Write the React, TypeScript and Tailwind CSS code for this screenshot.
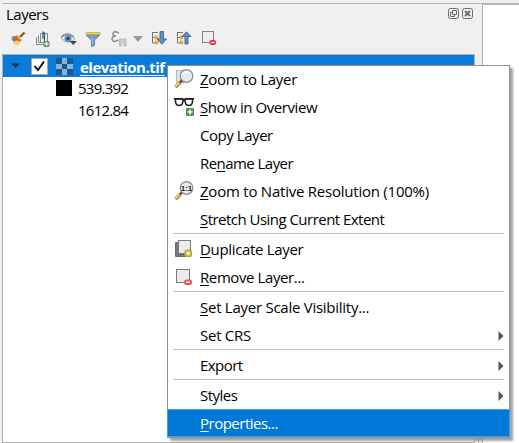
import type { ReactNode } from "react";

function PageIcon({ kind }: { kind: "remove" | "duplicate" }) {
  return (
    <svg width="20" height="20" viewBox="1 0 20 20">
      {kind === "duplicate" && <path d="M2.5 3.5h4v12h9v2h-13z" fill="#777" stroke="#6b6c69" />}
      <rect x={kind === "duplicate" ? 5.5 : 3.5} y={kind === "duplicate" ? 1.5 : 2.5} width={kind === "duplicate" ? 12 : 13} height="13" fill="#ebebeb" stroke="#7b7c77" />
      {kind === "duplicate" ? (
        <>
          <rect x="11.5" y="10.5" width="7.5" height="7.5" rx="2" fill="#bba52c" />
          <path d="M15.25 11.5v5.5M12.5 14.25H18M13.25 12.25l4 4M17.25 12.25l-4 4" stroke="#fff5a8" strokeWidth=".9" />
        </>
      ) : (
        <>
          <rect x="11" y="12.5" width="8" height="5.5" rx="2.5" fill="#ef5358" />
          <path d="M13 15.25h4" stroke="#fff" strokeWidth="1.5" />
        </>
      )}
    </svg>
  );
}

function ZoomIcon({ native = false }: { native?: boolean }) {
  return (
    <svg width="20" height="20" viewBox="0 0 20 20">
      {!native && <path d="M2.5 1.5h8v12h-8z" fill="#e4e4e4" stroke="#b3b3b3" />}
      <path d="M6 13.5 1.5 18" stroke="#8b7028" strokeWidth="3.4" />
      <path d="M5.5 13.5 1.5 17.5" stroke="#f2ce5b" strokeWidth="2.2" />
      <path d="m8.5 10.5-2.5 3" stroke="#333" strokeWidth="2" />
      <circle cx="12.5" cy="7" r="6.3" fill="#e8e8e8" stroke="#8c8c8c" strokeWidth="1.2" />
      {native ? (
        <text x="12.5" y="10" textAnchor="middle" fontFamily="Liberation Sans, sans-serif" fontWeight="bold" fontSize="8" fill="#222">1:1</text>
      ) : (
        <path d="M8.5 5.5a4.5 4.5 0 0 1 7-1.5" stroke="#fff" strokeWidth="1.5" fill="none" />
      )}
    </svg>
  );
}

function OverviewIcon() {
  return (
    <svg width="20" height="20" viewBox="0 0 20 20" fill="none">
      <path d="M0 1.8h7.5q1.5 0 2.5 1 1-1 2.5-1H20" stroke="#151515" strokeWidth="1.7" />
      <path d="M1.5 2q-.5 6.5 3.5 6.5 4 0 4-5.5M11 3q0 5.5 4 5.5 4 0 3.5-6.5" stroke="#151515" strokeWidth="1.5" />
      <rect x="12" y="11" width="8" height="8" rx="1.2" fill="#4d9157" />
      <path d="M16 12.5v5M13.5 15h5" stroke="#fff" strokeWidth="1.7" />
    </svg>
  );
}

function Broom() {
  return (
    <svg width="16" height="16" viewBox="0 0 16 16">
      <path d="m10 6 4.500-4.500" stroke="#8f5d20" strokeWidth="2.4" />
      <path d="m7 4 5 5-2 2-5-5z" fill="#c49128" />
      <path d="M1 5.5 6 5l4 5-1 2z" fill="#e95448" />
      <path d="m1 7.5 3 4 4-.5-4-4z" fill="#528ac5" />
      <path d="m3 10.5 4-1 4 1.5-3 3.5-4-1z" fill="#f6d34c" />
      <path d="m8 5 4 5" stroke="#ebcf86" />
    </svg>
  );
}

function AddGroup() {
  return (
    <svg width="16" height="17" viewBox="0 0 16 17" fill="none">
      <path d="M1.5 6.5v7h8M3.5 4.5v7h8M5.5 2.5h7v9h-7z" stroke="#858783" />
      <path d="M9.5 12V3q0-2-1.5-2v7" stroke="#315f87" strokeWidth="1.2" />
      <rect x="8.5" y="10" width="6" height="6" rx="1" fill="#579b60" />
      <path d="M11.5 11v4M9.5 13h4" stroke="#fff" strokeWidth="1.3" />
    </svg>
  );
}

function Eye() {
  return (
    <svg width="18" height="15" viewBox="0 0 18 15">
      <path d="M1 6q7-7 14 1-7 7-14-1z" fill="#e4e9ec" stroke="#a8abad" />
      <path d="M1 5q6-6 13 0" fill="none" stroke="#858a8d" strokeWidth="1.4" />
      <circle cx="8" cy="6.5" r="3.5" fill="#638eb7" />
      <circle cx="8" cy="6.5" r="1.5" fill="#223d58" />
      <path d="M9.5 9H17l-3.75 4z" fill="#454545" />
    </svg>
  );
}

function Filter() {
  return (
    <svg width="16" height="17" viewBox="0 0 16 17">
      <path d="M1.5 2.5h13v2L9.5 9v5.5l-3 1V9l-5-4.5z" fill="#6f9bc9" stroke="#567da5" strokeWidth=".8" />
      <path d="M1 1.5h14v2H1z" fill="#f4d447" stroke="#b69d38" strokeWidth=".6" />
      <path d="M7.5 6v8" stroke="#9ec1df" />
    </svg>
  );
}

function Expression() {
  return (
    <svg width="18" height="18" viewBox="0 0 18 18" fill="none">
      <path d="M8 3Q2 0 2 4q0 2 3 2-4 0-4 3.5Q2 13 7.5 10" stroke="#8c8c8c" strokeWidth="1.5" />
      <path d="M8.500 9h6.500v7h-2v-4h-2.500v4h-2z" fill="#cacaca" stroke="#b5b5b5" strokeWidth=".8" />
    </svg>
  );
}

function TreeArrow({ up = false }: { up?: boolean }) {
  return (
    <svg width="16" height="16" viewBox="0 0 16 16" fill="none">
      <path d="M1 1.5h6M1.5 1v11H4M1.5 6.5H4" stroke="#777" />
      <path d="M4.5 5.5h2v2h-2zM4.5 10.5h2v2h-2z" fill="#fff" stroke="#f29a32" strokeWidth="1.3" />
      <path d={up ? "M9 13V5.500H6L10.500 .8l4.500 4.700h-3V13z" : "M9 .5h3.500V8h3L10.750 13.200 6 8h3z"} fill="#5f8fc1" stroke="#3d6896" strokeWidth=".9" />
    </svg>
  );
}

function RemoveTool() {
  return (
    <svg width="16" height="16" viewBox="0 0 16 16">
      <rect x="1.5" y=".5" width="11" height="11" fill="#ececeb" stroke="#85857a" />
      <rect x="8.5" y="9" width="6.5" height="5" rx="2" fill="#ed3039" />
      <path d="M10 11.5h3.5" stroke="#fff" strokeWidth="1.2" />
    </svg>
  );
}

function MenuItem({ icon, children, tracking, arrow = false, first = false, selected = false }: { icon?: ReactNode; children: ReactNode; tracking: string; arrow?: boolean; first?: boolean; selected?: boolean }) {
  return (
    <div className={`flex shrink-0 items-center ${first ? "h-[27px] pb-px" : "h-7"} ${selected ? "-mx-px border border-[#3c9ff0] bg-[#0078d7] text-white" : ""}`}>
      <div className={`flex h-5 w-8 shrink-0 items-center ${selected ? "pl-[7px]" : "pl-1.5"}`}>{icon}</div>
      <span className={`whitespace-nowrap leading-5 ${tracking}`}>{children}</span>
      {arrow && <svg className="mt-0.5 mr-[5px] ml-auto" width="6" height="10" viewBox="0 0 6 10"><path d="M.5 0 5.5 5 .5 10z" fill="#555" /></svg>}
    </div>
  );
}

const U = ({ children }: { children: ReactNode }) => <span className="underline decoration-1 underline-offset-2">{children}</span>;
const Separator = () => <div className="mx-[5px] h-0.5 shrink-0 border-t border-[#bdbdbd]" />;

export default function App() {
  return (
    <div className="relative flex h-[443px] w-[519px] flex-col overflow-hidden bg-[#f0f0f0] font-['Open_Sans','Noto_Sans',sans-serif] text-[15px] text-black">
      <div className="ml-0.5 h-1 shrink-0 border-b border-[#b5b5b5]" />
      <div className="flex min-h-0 flex-1">
        <div className="flex w-[475px] flex-col pl-0.5">
          <div className="flex h-[22px] items-center justify-between pr-0.5 pl-1">
            <h1 className="pb-0.5 leading-5 tracking-[-0.5px]">Layers</h1>
            <div className="mb-1 flex gap-[3px]">
              <svg width="11" height="11" viewBox="0 0 11 11" fill="none" stroke="#6b6b69"><rect x=".5" y=".5" width="10" height="10" rx="2" /><path d="M4.5 2.5h4v4h-4zM4 4.5H2.5v4h4V7" /></svg>
              <svg width="11" height="11" viewBox="0 0 11 11" fill="none" stroke="#6b6b69"><rect x=".5" y=".5" width="10" height="10" rx="2" /><path d="m3 3 5 5M8 3 3 8" strokeWidth="2" /></svg>
            </div>
          </div>
          <div className="flex h-7 items-center pb-0.5 pl-2">
            <Broom />
            <div className="ml-[9px]"><AddGroup /></div>
            <div className="ml-[9px]"><Eye /></div>
            <div className="ml-[7px]"><Filter /></div>
            <div className="ml-[10px]"><Expression /></div>
            <svg className="ml-1" width="10" height="6" viewBox="0 0 10 6"><path d="M0 0h10L5 6z" fill="#999" /></svg>
            <div className="ml-2"><TreeArrow /></div>
            <div className="ml-[9px]"><TreeArrow up /></div>
            <div className="ml-[9px]"><RemoveTool /></div>
          </div>
          <div className="min-h-0 flex-1 border border-[#b0b0b0] bg-white">
            <div className="flex h-[22px] items-center bg-[#0a7bd8] text-white">
              <svg className="ml-2" width="10" height="6" viewBox="0 0 10 6"><path d="M0 .5h9L4.5 5z" fill="#153650" /></svg>
              <svg className="ml-2.5" width="17" height="17" viewBox="0 0 17 17"><path d="M.5.5h16v16H.5z" fill="#fff" stroke="#a8a8a8" /><path d="m3.5 8 3.5 4 6-8.5" fill="none" stroke="#000" strokeWidth="1.8" /></svg>
              <svg className="ml-2" width="17" height="17" viewBox="0 0 17 17">
                <path d="M0 0h17v17H0z" fill="#0872c4" />
                <path d="M0 0h6v6H0zM11 0h6v6h-6zM5 6h6v5H5zM0 11h6v6H0zM11 11h6v6h-6z" fill="#225685" />
                <path d="M6 0h5v6H6zM0 6h6v5H0zM11 6h6v5h-6zM6 11h5v6H6z" fill="#7bb7e6" />
              </svg>
              <span className="ml-[7px] pt-px whitespace-nowrap font-bold leading-5 tracking-[-0.52px] underline decoration-1 underline-offset-2">elevation.tif</span>
            </div>
            <div className="flex h-[22px] items-center pl-[53px]"><div className="size-4 bg-black" /><span className="ml-[6px] leading-5 tracking-[-0.75px]">539.392</span></div>
            <div className="flex h-[22px] items-center pl-[75px]"><span className="leading-5 tracking-[-0.75px]">1612.84</span></div>
          </div>
        </div>
        <div className="w-2 border-r border-[#b0b0b0]" />
        <div className="flex-1 border-t border-[#b5b5b5] bg-white" />
      </div>

      <div className="absolute bottom-0 left-[474px] flex h-1.5 w-[9px] justify-center border-x border-[#bbb] bg-[#eee]"><div className="w-px bg-[#bbb]" /></div>
      <div className="absolute top-[65px] left-[167px] flex h-[373px] w-[343px] flex-col border border-[#929292] bg-white shadow-[3px_3px_2px_0px_#777777aa]">
        <MenuItem first icon={<ZoomIcon />} tracking="tracking-[-0.3px]"><U>Z</U>oom to Layer</MenuItem>
        <MenuItem icon={<OverviewIcon />} tracking="tracking-[-0.42px]"><U>S</U>how in Overview</MenuItem>
        <MenuItem tracking="tracking-[-0.45px]">Copy Layer</MenuItem>
        <MenuItem tracking="tracking-[-0.55px]">Re<U>n</U>ame Layer</MenuItem>
        <MenuItem icon={<ZoomIcon native />} tracking="tracking-[-0.23px]"><U>Z</U>oom to Native Resolution (100%)</MenuItem>
        <MenuItem tracking="tracking-[-0.53px]"><U>S</U>tretch Using Current Extent</MenuItem>
        <Separator />
        <MenuItem icon={<PageIcon kind="duplicate" />} tracking="tracking-[-0.33px]"><U>D</U>uplicate Layer</MenuItem>
        <MenuItem icon={<PageIcon kind="remove" />} tracking="tracking-[-0.4px]"><U>R</U>emove Layer...</MenuItem>
        <Separator />
        <MenuItem tracking="tracking-[-0.26px]"><U>S</U>et Layer Scale Visibility...</MenuItem>
        <MenuItem arrow tracking="tracking-[-0.26px]">Set CRS</MenuItem>
        <Separator />
        <MenuItem arrow tracking="tracking-[-0.55px]">Export</MenuItem>
        <Separator />
        <MenuItem arrow tracking="tracking-[-0.5px]">Styles</MenuItem>
        <MenuItem selected tracking="tracking-[-0.5px]"><U>P</U>roperties...</MenuItem>
      </div>
    </div>
  );
}
